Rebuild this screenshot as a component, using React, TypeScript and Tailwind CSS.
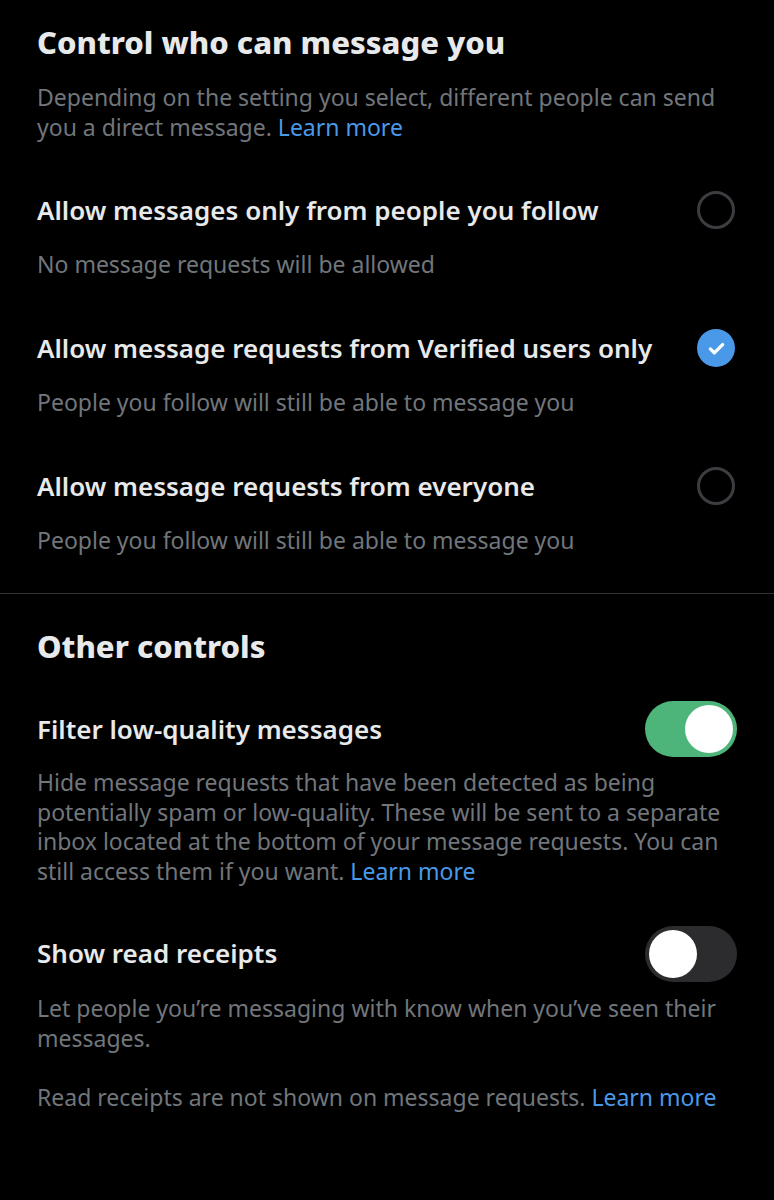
import React from "react";

const font = { fontFamily: '"Noto Sans", "Open Sans", sans-serif' };

function Radio({ checked }: { checked?: boolean }) {
  if (checked) {
    return (
      <div className="w-[38px] h-[38px] rounded-full bg-[#4a99e9] flex items-center justify-center shrink-0">
        <svg width="21" height="21" viewBox="0 0 24 24" fill="none">
          <path d="M5 12.5l4.5 4.5L19 7.5" stroke="white" strokeWidth="3.8" strokeLinecap="round" strokeLinejoin="round" />
        </svg>
      </div>
    );
  }
  return <div className="w-[38px] h-[38px] rounded-full border-[3px] border-[#3b3d40] shrink-0" />;
}

function Toggle({ on }: { on?: boolean }) {
  return (
    <div
      className={
        "w-[92px] h-[56px] rounded-full flex items-center px-[4px] shrink-0 " +
        (on ? "bg-[#4db57a] justify-end" : "bg-[#2c2c2e] justify-start")
      }
    >
      <div className="w-[48px] h-[48px] rounded-full bg-white" />
    </div>
  );
}

function Option({ title, sub, checked, first }: { title: string; sub: string; checked?: boolean; first?: boolean }) {
  return (
    <div className={first ? "mt-[46px]" : "mt-[47px]"}>
      <div className="flex items-center justify-between h-[44px]">
        <div className="text-[26px] font-semibold text-[#e7e9ea]">{title}</div>
        <div className="mr-[2px]">
          <Radio checked={checked} />
        </div>
      </div>
      <div className="mt-[17px] text-[23px] text-[#71767b] leading-[30px]">{sub}</div>
    </div>
  );
}

export default function App() {
  return (
    <div className="w-[774px] h-[1200px] bg-black overflow-hidden" style={font}>
      <div className="px-[37px] pt-[22px]">
        <div className="text-[31px] font-extrabold text-[#e7e9ea] leading-[40px]">Control who can message you</div>
        <div className="mt-[20px] text-[23px] leading-[30px] text-[#71767b]">
          Depending on the setting you select, different people can send you a direct message.{" "}
          <span className="text-[#4a99e9]">Learn more</span>
        </div>
        <Option first title="Allow messages only from people you follow" sub="No message requests will be allowed" />
        <Option title="Allow message requests from Verified users only" sub="People you follow will still be able to message you" checked />
        <Option title="Allow message requests from everyone" sub="People you follow will still be able to message you" />
      </div>
      <div className="h-px bg-[#2f3336] mt-[38px]" />
      <div className="px-[37px]">
        <div className="text-[31px] font-extrabold text-[#e7e9ea] leading-[40px] mt-[32px]">Other controls</div>
        <div className="flex items-center justify-between mt-[35px]">
          <div className="text-[26px] font-semibold text-[#e7e9ea]">Filter low-quality messages</div>
          <Toggle on />
        </div>
        <div className="mt-[11px] text-[23px] leading-[29.7px] text-[#71767b]">
          Hide message requests that have been detected as being potentially spam or low-quality. These will be sent to a separate inbox located at the bottom of your message requests. You can still access them if you want.{" "}
          <span className="text-[#4a99e9]">Learn more</span>
        </div>
        <div className="flex items-center justify-between mt-[39px]">
          <div className="text-[26px] font-semibold text-[#e7e9ea]">Show read receipts</div>
          <Toggle />
        </div>
        <div className="mt-[11px] text-[23px] leading-[30px] text-[#71767b]">
          Let people you’re messaging with know when you’ve seen their messages.
        </div>
        <div className="mt-[29px] text-[23px] leading-[30px] text-[#71767b]">
          Read receipts are not shown on message requests. <span className="text-[#4a99e9]">Learn more</span>
        </div>
      </div>
    </div>
  );
}
